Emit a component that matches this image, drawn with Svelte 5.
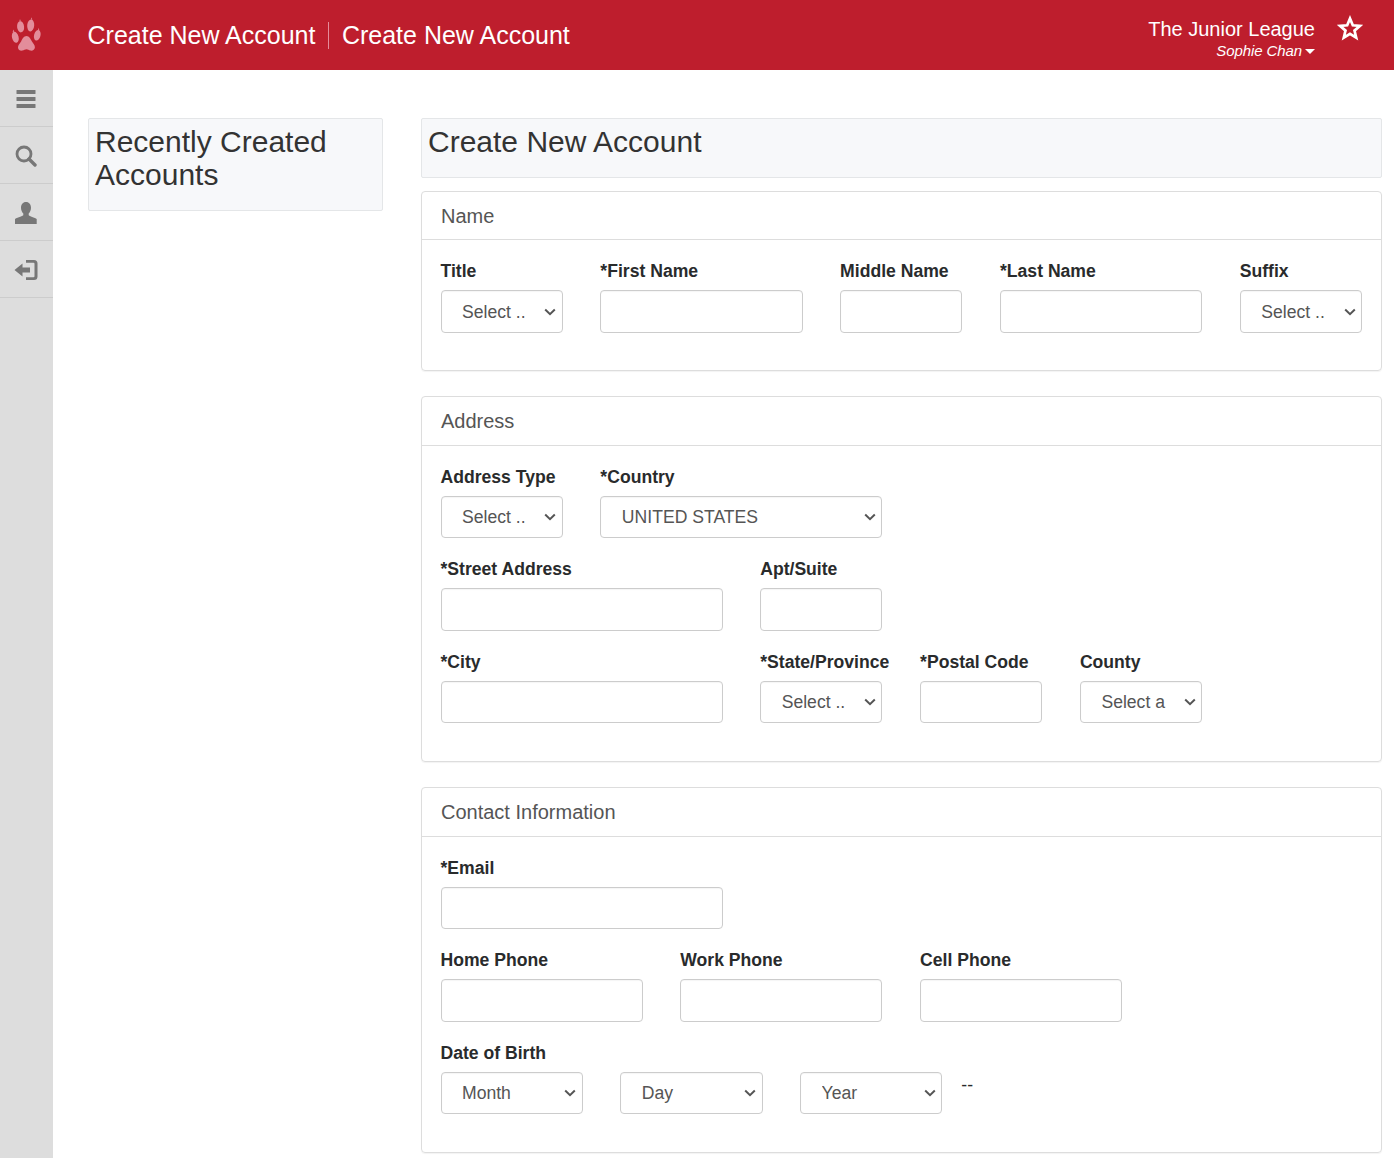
<script>
  const nameRow = [
    { label: 'Title', span: 2, select: 'Select ..' },
    { label: '*First Name', span: 3 },
    { label: 'Middle Name', span: 2 },
    { label: '*Last Name', span: 3 },
    { label: 'Suffix', span: 2, select: 'Select ..' }
  ];
  const addressRows = [
    [
      { label: 'Address Type', span: 2, select: 'Select ..' },
      { label: '*Country', span: 4, select: 'UNITED STATES' }
    ],
    [
      { label: '*Street Address', span: 4 },
      { label: 'Apt/Suite', span: 2 }
    ],
    [
      { label: '*City', span: 4 },
      { label: '*State/Province', span: 2, select: 'Select ..' },
      { label: '*Postal Code', span: 2 },
      { label: 'County', span: 2, select: 'Select a' }
    ]
  ];
  const contactRows = [
    [{ label: '*Email', span: 4 }],
    [
      { label: 'Home Phone', span: 3 },
      { label: 'Work Phone', span: 3 },
      { label: 'Cell Phone', span: 3 }
    ]
  ];
  const dob = ['Month', 'Day', 'Year'];
</script>

{#snippet row(fields)}
  <div class="row">
    {#each fields as f}
      <div class="field" style="grid-column: span {f.span}">
        <label>
          <span class="label-text">{f.label}</span>
          {#if f.select}
            <select><option>{f.select}</option></select>
          {:else}
            <input type="text" />
          {/if}
        </label>
      </div>
    {/each}
  </div>
{/snippet}

<div class="page">
  <header class="topbar">
    <svg class="paw" viewBox="0 0 30 34" width="30" height="34" aria-hidden="true">
      <g fill="#e38d9b">
        <ellipse cx="4.300" cy="19.300" rx="3.300" ry="5.600" transform="rotate(-14 4.300 19.300)" />
        <ellipse cx="9.600" cy="8.800" rx="3.500" ry="5.600" transform="rotate(-6 9.600 8.800)" />
        <ellipse cx="19.700" cy="7.400" rx="3.500" ry="6" transform="rotate(5 19.700 7.400)" />
        <ellipse cx="26.300" cy="17.300" rx="3.200" ry="5.400" transform="rotate(14 26.300 17.300)" />
        <path d="M15.500 18c2.700 0 4 2.800 5.300 5.300 1.200 2.200 3.300 3.600 3.100 6.200-.2 2.300-2.500 3.600-4.600 3-1.300-.4-2.400-1.300-3.800-1.300s-2.600.9-4 1.400c-2 .5-4.300-.6-4.500-2.900-.2-2.500 1.800-4 3.100-6.200C11.400 20.800 12.800 18 15.500 18z" />
        <path d="M8.300 3.500L9 1l.9 2.500zM19.900 1.500l.7-2.300.7 2.300zM1.700 14l.6-2.500 1 2.200zM27 12.300l.7-2.500.6 2.500z" />
      </g>
    </svg>
    <div class="crumbs">
      <span>Create New Account</span>
      <span class="sep"></span>
      <span>Create New Account</span>
    </div>
    <div class="org">
      <div class="org-name">The Junior League</div>
      <div class="org-user">Sophie Chan<span class="caret"></span></div>
    </div>
    <svg class="star" viewBox="0 0 26 26" width="26" height="26" aria-hidden="true">
      <path d="M13 3.500l2.800 6.800 7.200.6-5.500 4.700 1.700 7.100L13 18.900l-6.200 3.800 1.700-7.100L3 10.900l7.200-.6z" fill="none" stroke="#fff" stroke-width="2.700" stroke-linejoin="miter" />
    </svg>
  </header>

  <div class="shell">
    <nav class="side">
      <div class="side-item">
        <svg viewBox="0 0 20 20" width="20" height="20" fill="#777"><rect x="0.500" y="1" width="19" height="4" rx="0.500" /><rect x="0.500" y="8" width="19" height="4" rx="0.500" /><rect x="0.500" y="15" width="19" height="4" rx="0.500" /></svg>
      </div>
      <div class="side-item">
        <svg viewBox="0 0 22 22" width="22" height="22" fill="none" stroke="#777"><circle cx="9" cy="9" r="7" stroke-width="2.800" /><path d="M14 14l6 6" stroke-width="3.400" stroke-linecap="round" /></svg>
      </div>
      <div class="side-item">
        <svg viewBox="0 0 22 22" width="22" height="22" fill="#777"><path d="M11 0c3.200 0 5 2.500 5 5.700 0 2.300-1 4.500-2.300 5.700v1.500c0 1 5 2.100 8 4V22H0v-5.100c3-1.900 8.300-3 8.300-4v-1.500C7 10.200 6 8 6 5.700 6 2.500 7.800 0 11 0z" /></svg>
      </div>
      <div class="side-item">
        <svg viewBox="0 0 24 22" width="24" height="22" fill="#777"><path d="M12 1h8a3.500 3.500 0 0 1 3.500 3.500v13A3.500 3.500 0 0 1 20 21h-8v-2.800h7.500a1 1 0 0 0 1-1V4.800a1 1 0 0 0-1-1H12z" /><path d="M0.500 11L8.500 4.500v4H16v5H8.500v4z" /></svg>
      </div>
    </nav>

    <main class="main">
      <aside class="left">
        <h2 class="title-box">Recently Created Accounts</h2>
      </aside>
      <section class="right">
        <h2 class="title-box wide">Create New Account</h2>

        <div class="card">
          <div class="card-head">Name</div>
          <div class="card-body">{@render row(nameRow)}</div>
        </div>

        <div class="card address">
          <div class="card-head">Address</div>
          <div class="card-body">
            {#each addressRows as r}{@render row(r)}{/each}
          </div>
        </div>

        <div class="card">
          <div class="card-head">Contact Information</div>
          <div class="card-body">
            {#each contactRows as r}{@render row(r)}{/each}
            <div class="dob">
              <span class="label-text">Date of Birth</span>
              <div class="dob-row">
                {#each dob as d}
                  <select><option>{d}</option></select>
                {/each}
                <span class="dash">--</span>
              </div>
            </div>
          </div>
        </div>
      </section>
    </main>
  </div>
</div>

<style>
  :global(body) {
    margin: 0;
    background: #fff;
    font-family: "Liberation Sans", Arial, sans-serif;
    color: #292b2c;
  }
  .page {
    height: 1158px;
    overflow: hidden;
    display: flex;
    flex-direction: column;
  }
  .topbar {
    height: 70px;
    flex: none;
    background: #be1e2d;
    color: #fff;
    display: flex;
    align-items: center;
    padding: 0 30px 0 11px;
    box-sizing: border-box;
  }
  .paw {
    flex: none;
    margin: 0 46.500px 0 0;
    overflow: visible;
  }
  .crumbs {
    display: flex;
    align-items: center;
    font-size: 25px;
    flex: 1;
  }
  .sep {
    width: 1px;
    height: 27px;
    background: #e58c9a;
    margin: 0 13px 0 12.500px;
  }
  .org {
    text-align: right;
    margin-right: 23px;
    position: relative;
    top: 4px;
  }
  .org-name {
    font-size: 20px;
    line-height: 23px;
  }
  .org-user {
    font-size: 15px;
    font-style: italic;
    line-height: 20px;
    letter-spacing: -0.1px;
  }
  .caret {
    display: inline-block;
    width: 0;
    height: 0;
    margin-left: 3px;
    vertical-align: 2px;
    border-left: 5px solid transparent;
    border-right: 5px solid transparent;
    border-top: 5px solid #fff;
  }
  .star {
    flex: none;
    position: relative;
    top: -7px;
    left: -1px;
  }
  .shell {
    flex: 1;
    display: flex;
    min-height: 0;
  }
  .side {
    width: 53px;
    flex: none;
    background: #ddd;
  }
  .side-item {
    height: 57px;
    padding: 2px 2px 0 0;
    border-bottom: 1px solid #ccc;
    box-sizing: border-box;
    display: flex;
    align-items: center;
    justify-content: center;
  }
  .main {
    flex: 1;
    display: flex;
    align-items: flex-start;
    gap: 38px;
    padding: 48px 12px 0 35px;
    min-width: 0;
  }
  .left {
    width: 295px;
    flex: none;
  }
  .right {
    flex: 1;
    min-width: 0;
  }
  .title-box {
    margin: 0;
    padding: 6px 6px 19px;
    font-size: 30px;
    font-weight: 400;
    line-height: 33px;
    color: #333;
    background: #f7f8fa;
    border: 1px solid #e4e6e8;
    border-radius: 2px;
    box-sizing: border-box;
  }
  .title-box.wide {
    height: 59.600px;
    margin-bottom: 13px;
  }
  .card {
    border: 1px solid #ddd;
    border-radius: 4px;
    margin-bottom: 25px;
    box-shadow: 0 1px 1px rgba(0, 0, 0, 0.05);
  }
  .card.address {
    margin-bottom: 25.200px;
  }
  .card.address .card-body {
    padding-bottom: 19.600px;
  }
  .card-head {
    height: 48.800px;
    line-height: 48px;
    padding-left: 19px;
    font-size: 20px;
    color: #555;
    border-bottom: 1px solid #ddd;
    box-sizing: border-box;
  }
  .card-body {
    padding: 18px 19px 19px 18.500px;
  }
  .row {
    display: grid;
    grid-template-columns: repeat(12, 1fr);
    column-gap: 37.600px;
    margin-bottom: 18.100px;
  }
  .field label {
    display: block;
  }
  .label-text {
    display: block;
    font-size: 17.6px;
    font-weight: 700;
    line-height: 26.400px;
    margin-bottom: 5.600px;
    color: #292b2c;
    white-space: nowrap;
  }
  input,
  select {
    display: block;
    width: 100%;
    height: 42.400px;
    box-sizing: border-box;
    border: 1px solid #ccc;
    border-radius: 4px;
    background-color: #fff;
    font-family: inherit;
    font-size: 17.6px;
    color: #555;
    padding: 6px 12px;
    box-shadow: inset 0 1px 1px rgba(0, 0, 0, 0.04);
  }
  select {
    appearance: none;
    padding-left: 20.500px;
    padding-right: 24px;
    background-image: url("data:image/svg+xml,%3Csvg xmlns='http://www.w3.org/2000/svg' width='12' height='8' viewBox='0 0 12 8'%3E%3Cpath d='M1.200 1.500L6 6.200l4.800-4.700' fill='none' stroke='%23555' stroke-width='2'/%3E%3C/svg%3E");
    background-repeat: no-repeat;
    background-position: right 5.500px center;
    background-size: 12px 8px;
  }
  .dob {
    margin-bottom: 18.800px;
  }
  .dob-row {
    display: flex;
    gap: 37.400px;
    align-items: flex-start;
  }
  .dob-row select {
    width: 142.400px;
    flex: none;
  }
  .dash {
    margin-left: -18.500px;
    font-size: 17.6px;
    line-height: 26px;
    color: #292b2c;
  }
</style>
